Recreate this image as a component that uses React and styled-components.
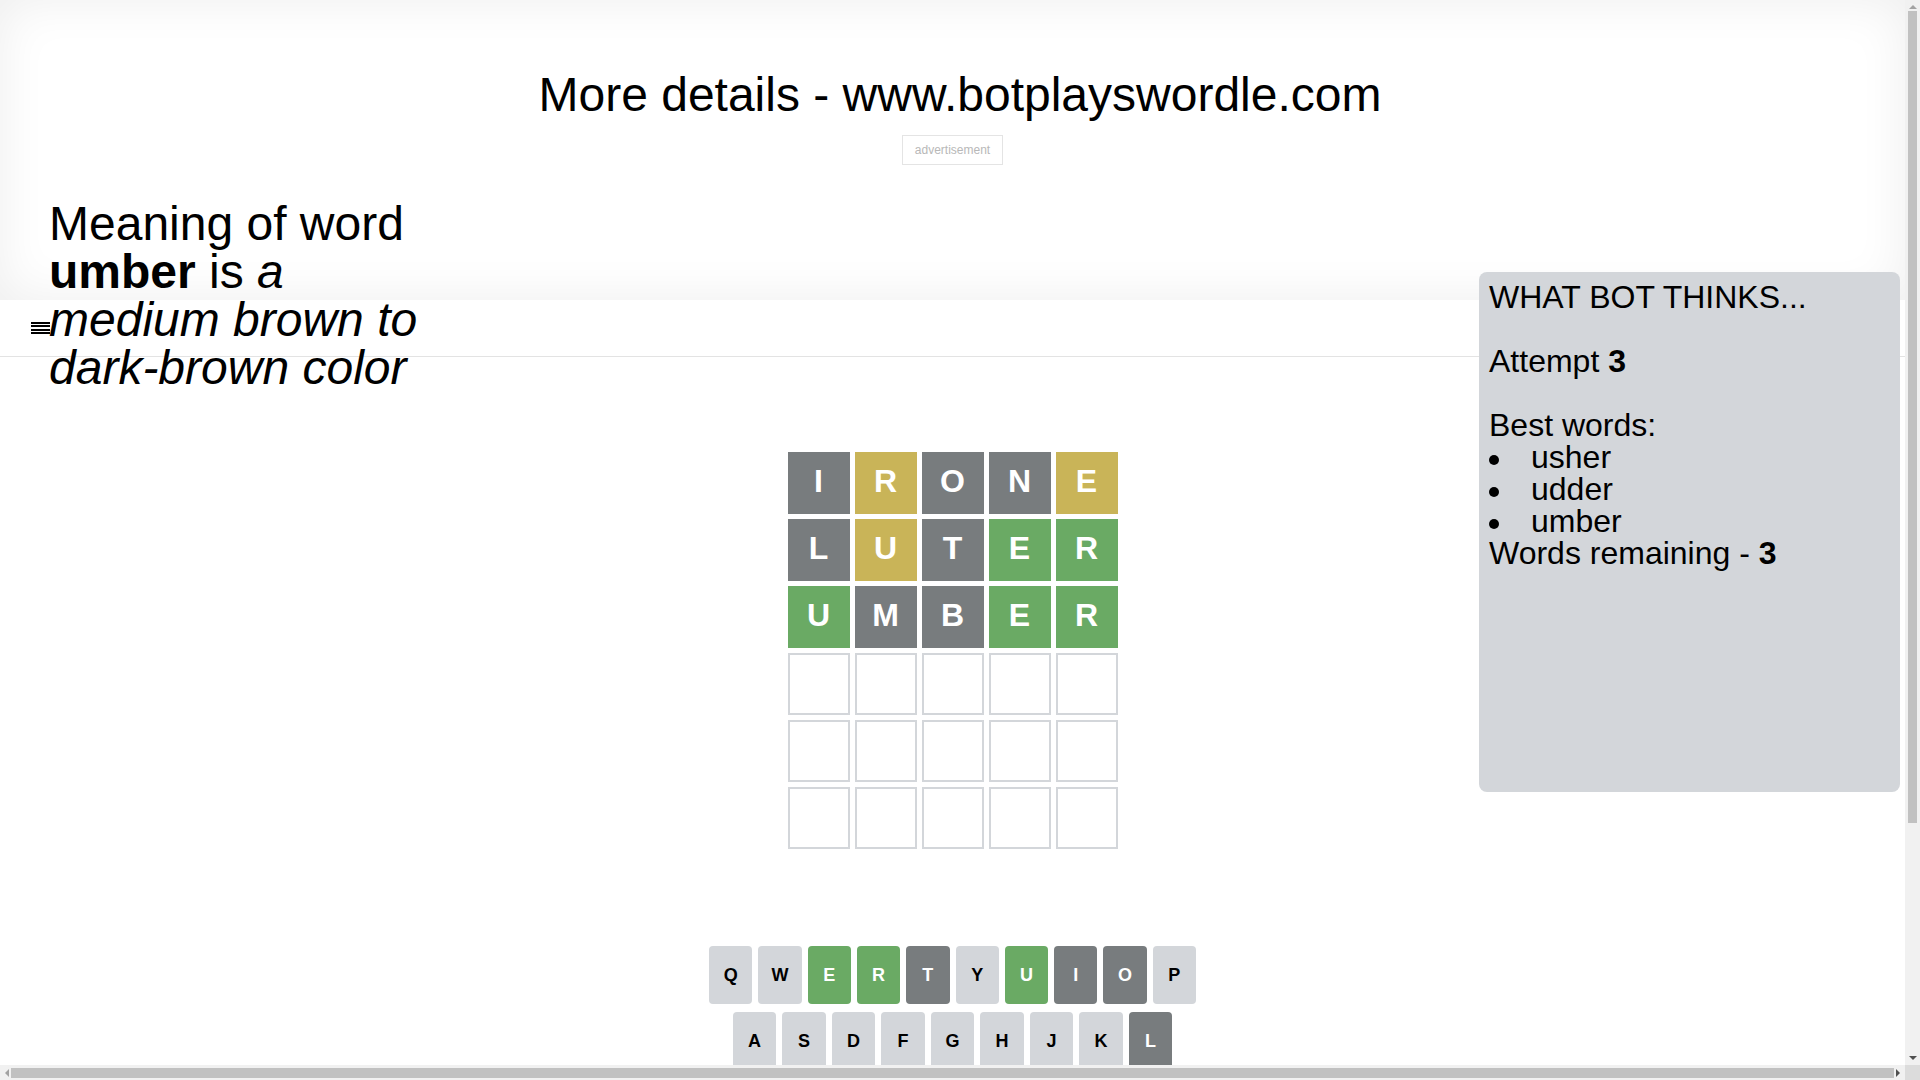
import React from 'react';
import styled, { createGlobalStyle } from 'styled-components';

const GlobalStyle = createGlobalStyle`
  html {
    overflow-y: scroll;
  }
  body {
    margin: 0;
    background: #fff;
    color: #000;
    font-family: "Liberation Sans", Arial, sans-serif;
  }
`;

const COLORS = {
  g: '#6aaa64',
  y: '#c9b458',
  x: '#787c7e',
  l: '#d3d6da',
};

const Page = styled.div`
  position: relative;
  width: calc(100% - 15px);
  padding-bottom: 60px;
`;

const Header = styled.header`
  height: 300px;
  box-sizing: border-box;
  padding-top: 67px;
  box-shadow: inset 0 0 50px rgba(0, 0, 0, 0.07);
`;

const Title = styled.h1`
  width: 100vw;
  margin: 0;
  text-align: center;
  font-size: 48px;
  font-weight: 400;
`;

const AdBox = styled.div`
  width: fit-content;
  margin: 13px auto 0;
  padding: 7px 12px;
  border: 1px solid #e4e4e4;
  font-size: 12px;
  line-height: 14px;
  color: #b8b8b8;
`;

const Nav = styled.nav`
  height: 56px;
  display: flex;
  align-items: center;
  padding-left: 31px;
  border-bottom: 1px solid #e3e3e3;
`;

const Meaning = styled.div`
  position: absolute;
  top: 200px;
  left: 49px;
  width: 390px;
  font-size: 48px;
  line-height: 48px;
`;

const BotPanel = styled.aside`
  position: absolute;
  top: 272px;
  right: 5px;
  width: 421px;
  height: 520px;
  box-sizing: border-box;
  padding: 9px 10px;
  background: #d3d6da;
  border-radius: 8px;
  font-size: 32px;
  line-height: 32px;
`;

const Gap = styled.div`
  height: 32px;
`;

const WordList = styled.ul`
  list-style: none;
  margin: 0;
  padding: 0;
`;

const WordItem = styled.li`
  display: flex;
  align-items: center;

  &::before {
    content: '';
    width: 10px;
    height: 10px;
    border-radius: 50%;
    background: #000;
    margin: 6px 32px 0 0;
  }
`;

const Board = styled.div`
  display: grid;
  grid-template-columns: repeat(5, 62px);
  grid-auto-rows: 62px;
  gap: 5px;
  justify-content: center;
  margin-top: 95px;
`;

const Tile = styled.div`
  box-sizing: border-box;
  display: flex;
  align-items: center;
  justify-content: center;
  padding-bottom: 3px;
  background: ${p => (p.$state ? COLORS[p.$state] : '#fff')};
  border: 2px solid ${p => (p.$state ? COLORS[p.$state] : '#d3d6da')};
  color: #fff;
  font-size: 32px;
  font-weight: 700;
`;

const Keyboard = styled.div`
  margin-top: 97px;
  display: flex;
  flex-direction: column;
  align-items: center;
  gap: 8px;
`;

const KeyRow = styled.div`
  display: flex;
  gap: 6px;
`;

const Key = styled.div`
  width: ${p => p.$w || 43.3}px;
  height: 58px;
  display: flex;
  align-items: center;
  justify-content: center;
  border-radius: 4px;
  background: ${p => COLORS[p.$state || 'l']};
  color: ${p => (p.$state && p.$state !== 'l' ? '#fff' : '#000')};
  font-size: 18px;
  font-weight: 700;
`;

/* browser scrollbars, drawn over the page as in the screenshot */
const VScroll = styled.div`
  position: fixed;
  top: 0;
  right: 0;
  bottom: 15px;
  width: 15px;
  background: #f1f1f1;
  display: flex;
  flex-direction: column;
  align-items: center;
`;

const HScroll = styled.div`
  position: fixed;
  left: 0;
  right: 15px;
  bottom: 0;
  height: 15px;
  background: #f1f1f1;
  display: flex;
  align-items: center;
`;

const Corner = styled.div`
  position: fixed;
  right: 0;
  bottom: 0;
  width: 15px;
  height: 15px;
  background: #dcdcdc;
`;

const Thumb = styled.div`
  background: #c1c1c1;
  ${p => (p.$vertical ? 'width: 9px; height: 812px; margin-top: 2px;' : 'height: 10px; flex: 1; margin: 0 2px;')}
`;

const Arrow = styled.div`
  width: 0;
  height: 0;
  border: 4px solid transparent;
  ${p => p.$dir === 'up' && 'border-bottom-color: #a3a3a3; border-top-width: 0; margin-top: 5px;'}
  ${p => p.$dir === 'down' && 'border-top-color: #505050; border-bottom-width: 0; margin-top: auto; margin-bottom: 5px;'}
  ${p => p.$dir === 'left' && 'border-right-color: #a3a3a3; border-left-width: 0; margin-left: 5px;'}
  ${p => p.$dir === 'right' && 'border-left-color: #505050; border-right-width: 0; margin-right: 5px;'}
`;

const guesses = [
  ['IRONE', 'xyxxy'],
  ['LUTER', 'xyxgg'],
  ['UMBER', 'gxxgg'],
];

const keyState = {
  E: 'g', R: 'g', U: 'g', T: 'x', I: 'x', O: 'x', L: 'x', N: 'x', M: 'x', B: 'x',
};

const keyRows = [
  { keys: 'QWERTYUIOP'.split(''), w: 43.3 },
  { keys: 'ASDFGHJKL'.split(''), w: 43.5 },
  { keys: ['ENTER', ...'ZXCVBNM'.split(''), '⌫'], w: 43.5 },
];

const HamburgerIcon = () => (
  <svg width="19" height="12" viewBox="0 0 19 12" shapeRendering="crispEdges">
    <rect x="0" y="0" width="19" height="2" fill="#000" />
    <rect x="0" y="3" width="19" height="2" fill="#000" />
    <rect x="0" y="7" width="19" height="2" fill="#000" />
    <rect x="0" y="10" width="19" height="2" fill="#000" />
  </svg>
);

const App = () => {
  const cells = [];
  for (let r = 0; r < 6; r++) {
    for (let c = 0; c < 5; c++) {
      const g = guesses[r];
      cells.push(
        <Tile key={`${r}-${c}`} $state={g ? g[1][c] : null}>
          {g ? g[0][c] : ''}
        </Tile>
      );
    }
  }

  return (
    <>
      <GlobalStyle />
      <Page>
        <Header>
          <Title>More details - www.botplayswordle.com</Title>
          <AdBox>advertisement</AdBox>
        </Header>
        <Nav>
          <HamburgerIcon />
        </Nav>

        <Meaning>
          Meaning of word <b>umber</b> is <i>a medium brown to dark-brown color</i>
        </Meaning>

        <BotPanel>
          <div>WHAT BOT THINKS...</div>
          <Gap />
          <div>Attempt <b>3</b></div>
          <Gap />
          <div>Best words:</div>
          <WordList>
            <WordItem>usher</WordItem>
            <WordItem>udder</WordItem>
            <WordItem>umber</WordItem>
          </WordList>
          <div>Words remaining - <b>3</b></div>
        </BotPanel>

        <Board>{cells}</Board>

        <Keyboard>
          {keyRows.map((row, i) => (
            <KeyRow key={i}>
              {row.keys.map(k => (
                <Key key={k} $state={keyState[k]} $w={k === 'ENTER' || k === '⌫' ? 65 : row.w}>
                  {k}
                </Key>
              ))}
            </KeyRow>
          ))}
        </Keyboard>
      </Page>

      <VScroll>
        <Arrow $dir="up" />
        <Thumb $vertical />
        <Arrow $dir="down" />
      </VScroll>
      <HScroll>
        <Arrow $dir="left" />
        <Thumb />
        <Arrow $dir="right" />
      </HScroll>
      <Corner />
    </>
  );
};

export default App;
